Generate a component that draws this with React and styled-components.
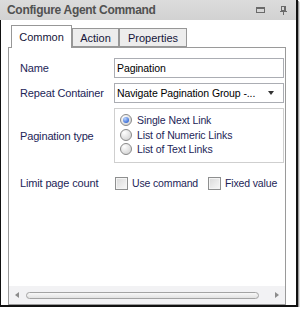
import React, { useId } from "react";
import styled, { createGlobalStyle } from "styled-components";

const Global = createGlobalStyle`
  html, body { margin: 0; padding: 0; background: #ffffff; }
  body { font-family: "Liberation Sans", Arial, sans-serif; font-size: 11px; }
  * { box-sizing: border-box; }
`;

const Frame = styled.div`
  width: 298px;
  height: 307px;
  display: flex;
  flex-direction: column;
  border-right: 2px solid #111;
  border-bottom: 2px solid #111;
  box-shadow: 1px 1px 0 #9a9a9a, 2px 2px 0 #dedede;
  background: #fff;
`;

const TitleBar = styled.div`
  height: 20px;
  flex: none;
  display: flex;
  align-items: center;
  padding-left: 7px;
  background: linear-gradient(#dcdcdc, #d2d2d2);
`;

const Title = styled.div`
  flex: 1;
  font-weight: bold;
  font-size: 12px;
  letter-spacing: -0.3px;
  color: #515151;
  white-space: nowrap;
`;

const TitleIcons = styled.div`
  display: flex;
  align-items: center;
  gap: 15px;
  padding-right: 9px;
  color: #6a6a6a;
`;

const Body = styled.div`
  flex: 1;
  border-left: 1px solid #111;
  padding: 5px 10px 0 7px;
  display: flex;
  flex-direction: column;
`;

const TabStrip = styled.div`
  height: 22px;
  display: flex;
  align-items: flex-end;
  padding-left: 3px;
`;

const Tab = styled.div`
  width: ${(p) => p.$w}px;
  height: ${(p) => (p.$active ? 23 : 19)}px;
  margin-bottom: ${(p) => (p.$active ? -1 : 0)}px;
  border: 1px solid #979797;
  border-bottom: ${(p) => (p.$active ? "none" : "1px solid #979797")};
  background: ${(p) => (p.$active ? "#ffffff" : "#ededed")};
  color: #15153a;
  display: flex;
  align-items: center;
  justify-content: center;
  padding-bottom: ${(p) => (p.$active ? 1 : 0)}px;
  position: relative;
  z-index: ${(p) => (p.$active ? 1 : 0)};
  font-size: 11px;
`;

const Panel = styled.div`
  height: 258px;
  border: 1px solid #9a9a9a;
  background: #fff;
  display: flex;
  flex-direction: column;
`;

const Form = styled.div`
  flex: 1;
  padding: 10px 1px 0 11px;
  display: flex;
  flex-direction: column;
`;

const Row = styled.div`
  display: flex;
  align-items: center;
  margin-top: ${(p) => p.$mt || 0}px;
  min-height: 20px;
`;

const Label = styled.div`
  width: 94px;
  flex: none;
  color: #1d2557;
  letter-spacing: -0.15px;
  white-space: nowrap;
`;

const Field = styled.div`
  width: 170px;
  height: 20px;
  border: 1px solid #abadb3;
  padding: 0 2px;
  display: flex;
  align-items: center;
  color: #000;
  font-size: 10.5px;
  letter-spacing: -0.1px;
  white-space: nowrap;
  overflow: hidden;
`;

const FieldText = styled.span`
  flex: 1;
`;

const Arrow = styled.span`
  width: 0;
  height: 0;
  border-left: 3.5px solid transparent;
  border-right: 3.5px solid transparent;
  border-top: 4px solid #333;
  margin-right: 7px;
`;

const GroupBox = styled.div`
  width: 170px;
  height: 55px;
  border: 1px solid #cfcfcf;
  padding: 4px 0 0 5px;
  display: flex;
  flex-direction: column;
`;

const RadioRow = styled.div`
  height: 14.5px;
  display: flex;
  align-items: center;
  gap: 5px;
  color: #1d2557;
  font-size: 10.5px;
  letter-spacing: -0.1px;
  white-space: nowrap;
`;

const Checks = styled.div`
  display: flex;
  align-items: center;
  padding-left: 1px;
`;

const CheckItem = styled.div`
  display: flex;
  align-items: center;
  gap: 4px;
  margin-right: ${(p) => p.$mr || 0}px;
  color: #1d2557;
  font-size: 10.5px;
  letter-spacing: -0.15px;
  white-space: nowrap;
`;

const Box = styled.span`
  width: 13px;
  height: 13px;
  border: 1px solid #8e8f8f;
  background: linear-gradient(135deg, #d9d9d9, #f8f8f8);
  box-shadow: inset 0 0 0 1px #f4f4f4;
  flex: none;
`;

const ScrollBar = styled.div`
  height: 18px;
  flex: none;
  background: #f2f2f4;
  display: flex;
  align-items: center;
  padding-left: 6px;
`;

const ScrollArrow = styled.span`
  width: 0;
  height: 0;
  border-top: 3.5px solid transparent;
  border-bottom: 3.5px solid transparent;
  ${(p) =>
    p.$dir === "left"
      ? "border-right: 4px solid #8c8c8c;"
      : "border-left: 4px solid #8c8c8c;"}
`;

const Thumb = styled.span`
  width: 233px;
  height: 7px;
  margin: 0 16px 0 7px;
  border: 1px solid #a3a3a3;
  border-radius: 4px;
  background: linear-gradient(#f8f8f8, #e2e2e2);
`;

function Radio({ checked }) {
  const id = useId().replace(/:/g, "");
  return (
    <svg width="12" height="12" viewBox="0 0 12 12" style={{ flex: "none" }}>
      <defs>
        <radialGradient id={`r${id}`} cx="0.35" cy="0.3" r="0.8">
          <stop offset="0" stopColor="#ffffff" />
          <stop offset="1" stopColor="#d0d0d0" />
        </radialGradient>
        <radialGradient id={`d${id}`} cx="0.35" cy="0.3" r="0.8">
          <stop offset="0" stopColor="#b9d4ff" />
          <stop offset="1" stopColor="#2a5fd0" />
        </radialGradient>
      </defs>
      <circle cx="6" cy="6" r="5.5" fill={`url(#r${id})`} stroke="#8a8a8a" />
      {checked && <circle cx="6" cy="6" r="3" fill={`url(#d${id})`} />}
    </svg>
  );
}

function RestoreIcon() {
  return (
    <svg width="9" height="6" viewBox="0 0 9 6">
      <rect x="0.5" y="0.5" width="8" height="5" fill="none" stroke="#6a6a6a" />
      <rect x="0" y="0" width="9" height="2" fill="#6a6a6a" />
    </svg>
  );
}

function PinIcon() {
  return (
    <svg width="7" height="9" viewBox="0 0 7 9">
      <rect x="1.5" y="0.5" width="4" height="4" fill="none" stroke="#6a6a6a" />
      <rect x="4" y="1" width="1" height="4" fill="#6a6a6a" />
      <rect x="0" y="5" width="7" height="1" fill="#6a6a6a" />
      <rect x="3" y="6" width="1" height="3" fill="#6a6a6a" />
    </svg>
  );
}

export default function App() {
  return (
    <>
      <Global />
      <Frame>
        <TitleBar>
          <Title>Configure Agent Command</Title>
          <TitleIcons>
            <RestoreIcon />
            <PinIcon />
          </TitleIcons>
        </TitleBar>
        <Body>
          <TabStrip>
            <Tab $active $w={61}>Common</Tab>
            <Tab $w={47}>Action</Tab>
            <Tab $w={68}>Properties</Tab>
          </TabStrip>
          <Panel>
            <Form>
              <Row>
                <Label>Name</Label>
                <Field>
                  <FieldText>Pagination</FieldText>
                </Field>
              </Row>
              <Row $mt={5}>
                <Label>Repeat Container</Label>
                <Field>
                  <FieldText>Navigate Pagination Group -...</FieldText>
                  <Arrow />
                </Field>
              </Row>
              <Row $mt={5}>
                <Label>Pagination type</Label>
                <GroupBox>
                  <RadioRow>
                    <Radio checked />
                    Single Next Link
                  </RadioRow>
                  <RadioRow>
                    <Radio />
                    List of Numeric Links
                  </RadioRow>
                  <RadioRow>
                    <Radio />
                    List of Text Links
                  </RadioRow>
                </GroupBox>
              </Row>
              <Row $mt={10}>
                <Label>Limit page count</Label>
                <Checks>
                  <CheckItem $mr={10}>
                    <Box />
                    Use command
                  </CheckItem>
                  <CheckItem>
                    <Box />
                    Fixed value
                  </CheckItem>
                </Checks>
              </Row>
            </Form>
            <ScrollBar>
              <ScrollArrow $dir="left" />
              <Thumb />
              <ScrollArrow $dir="right" />
            </ScrollBar>
          </Panel>
        </Body>
      </Frame>
    </>
  );
}
